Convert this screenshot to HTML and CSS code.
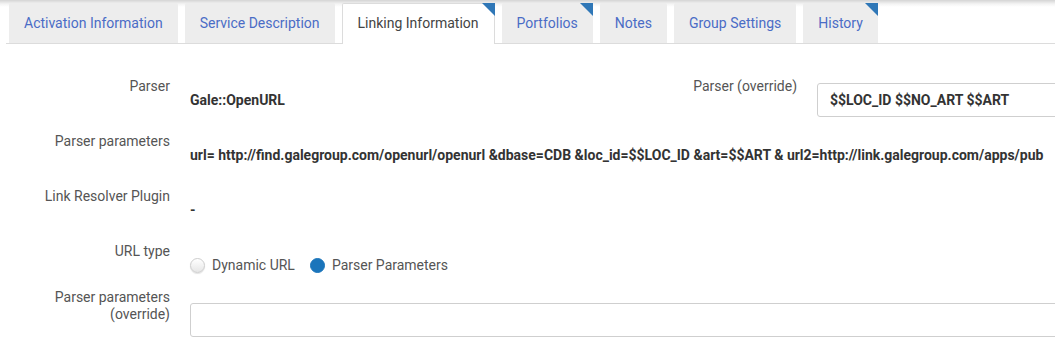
FILE: index.html
```html
<!DOCTYPE html>
<html lang="en">
<head>
    <meta charset="UTF-8">
    <meta name="viewport" content="width=device-width, initial-scale=1.0">
    <title>Linking Information</title>
    <link rel="stylesheet" href="styles.css">
</head>
<body>
    <header class="tab-bar">
        <nav class="tabs">
            <a href="#" class="tab">Activation Information</a>
            <a href="#" class="tab">Service Description</a>
            <a href="#" class="tab active has-flag">Linking Information</a>
            <a href="#" class="tab has-flag">Portfolios</a>
            <a href="#" class="tab">Notes</a>
            <a href="#" class="tab">Group Settings</a>
            <a href="#" class="tab has-flag">History</a>
        </nav>
    </header>

    <main class="form">
        <div class="row">
            <div class="field field-left">
                <div class="label">Parser</div>
                <div class="value">Gale::OpenURL</div>
            </div>
            <div class="field field-right">
                <label class="label" for="parser-override">Parser (override)</label>
                <input type="text" id="parser-override" class="input" value="$$LOC_ID $$NO_ART $$ART">
            </div>
        </div>

        <div class="row">
            <div class="label">Parser parameters</div>
            <div class="value">url= http://find.galegroup.com/openurl/openurl &amp;dbase=CDB &amp;loc_id=$$LOC_ID &amp;art=$$ART &amp; url2=http://link.galegroup.com/apps/pub</div>
        </div>

        <div class="row">
            <div class="label">Link Resolver Plugin</div>
            <div class="value">-</div>
        </div>

        <div class="row">
            <div class="label">URL type</div>
            <div class="value radios">
                <span class="radio-option"><span class="radio"></span>Dynamic URL</span>
                <span class="radio-option"><span class="radio checked"></span>Parser Parameters</span>
            </div>
        </div>

        <div class="row">
            <label class="label multi" for="params-override">Parser parameters<br>(override)</label>
            <input type="text" id="params-override" class="input">
        </div>
    </main>
</body>
</html>
```

FILE: styles.css
```css
* {
    margin: 0;
    padding: 0;
    box-sizing: border-box;
    font-family: Roboto, 'Liberation Sans', sans-serif;
}

body {
    background-color: #fff;
    overflow: hidden;
}

.tab-bar {
    background: linear-gradient(#d4d4d4, #f4f4f4 4px, #fff 7px);
    padding-left: 6px;
}

.tabs {
    display: flex;
    gap: 7px;
    padding: 3px 0 0 3px;
    border-bottom: 1px solid #dcdcdc;
}

.tab {
    position: relative;
    display: block;
    height: 40px;
    line-height: 40px;
    padding: 0 15px;
    font-size: 14px;
    color: #4a6cc6;
    text-decoration: none;
    background-color: #ededed;
    border-radius: 2px 2px 0 0;
    white-space: nowrap;
}

.tab.active {
    background-color: #fff;
    color: #444;
    border: 1px solid #dcdcdc;
    border-bottom: none;
    height: 41px;
    margin-bottom: -1px;
    line-height: 39px;
    padding: 0 15px;
}

.tab.has-flag::after {
    content: "";
    position: absolute;
    top: 0;
    right: 0;
    border-style: solid;
    border-width: 0 13px 13px 0;
    border-color: transparent #2f77b7 transparent transparent;
}

.tab.active.has-flag::after {
    top: -1px;
    right: -1px;
}

.form {
    margin-top: 32px;
}

.row {
    display: flex;
    margin-bottom: 14px;
}

.field {
    display: flex;
}

.field-left {
    flex: 0 0 627px;
}

.field-right {
    flex: 1;
}

.label {
    flex: 0 0 170px;
    width: 170px;
    text-align: right;
    font-size: 14px;
    line-height: 20px;
    color: #555;
}

.label.multi {
    line-height: 17px;
    margin-top: -7px;
}

.value {
    margin: 7px 0 0 20px;
    line-height: 34px;
    font-size: 14px;
    font-weight: 700;
    color: #333;
    white-space: nowrap;
}

/* right edge is cut off by the window, as in the screen */
.input {
    flex: 1;
    min-width: 0;
    margin: 7px -4px 0 20px;
    height: 34px;
    padding: 0 12px;
    border: 1px solid #cfcfcf;
    border-radius: 3px;
    font-size: 14px;
    font-weight: 700;
    color: #333;
    outline: none;
}

.radios {
    display: flex;
    align-items: center;
    gap: 15px;
    font-weight: 400;
    color: #555;
}

.radio-option {
    display: flex;
    align-items: center;
    gap: 7px;
}

.radio {
    width: 15px;
    height: 15px;
    border-radius: 50%;
    border: 1px solid #cdcdcd;
    background: linear-gradient(#fff, #e6e6e6);
    box-shadow: 0 1px 1px rgba(0,0,0,0.12);
}

.radio.checked {
    border-color: #1b75bb;
    background: #1b75bb;
    box-shadow: none;
}
```
